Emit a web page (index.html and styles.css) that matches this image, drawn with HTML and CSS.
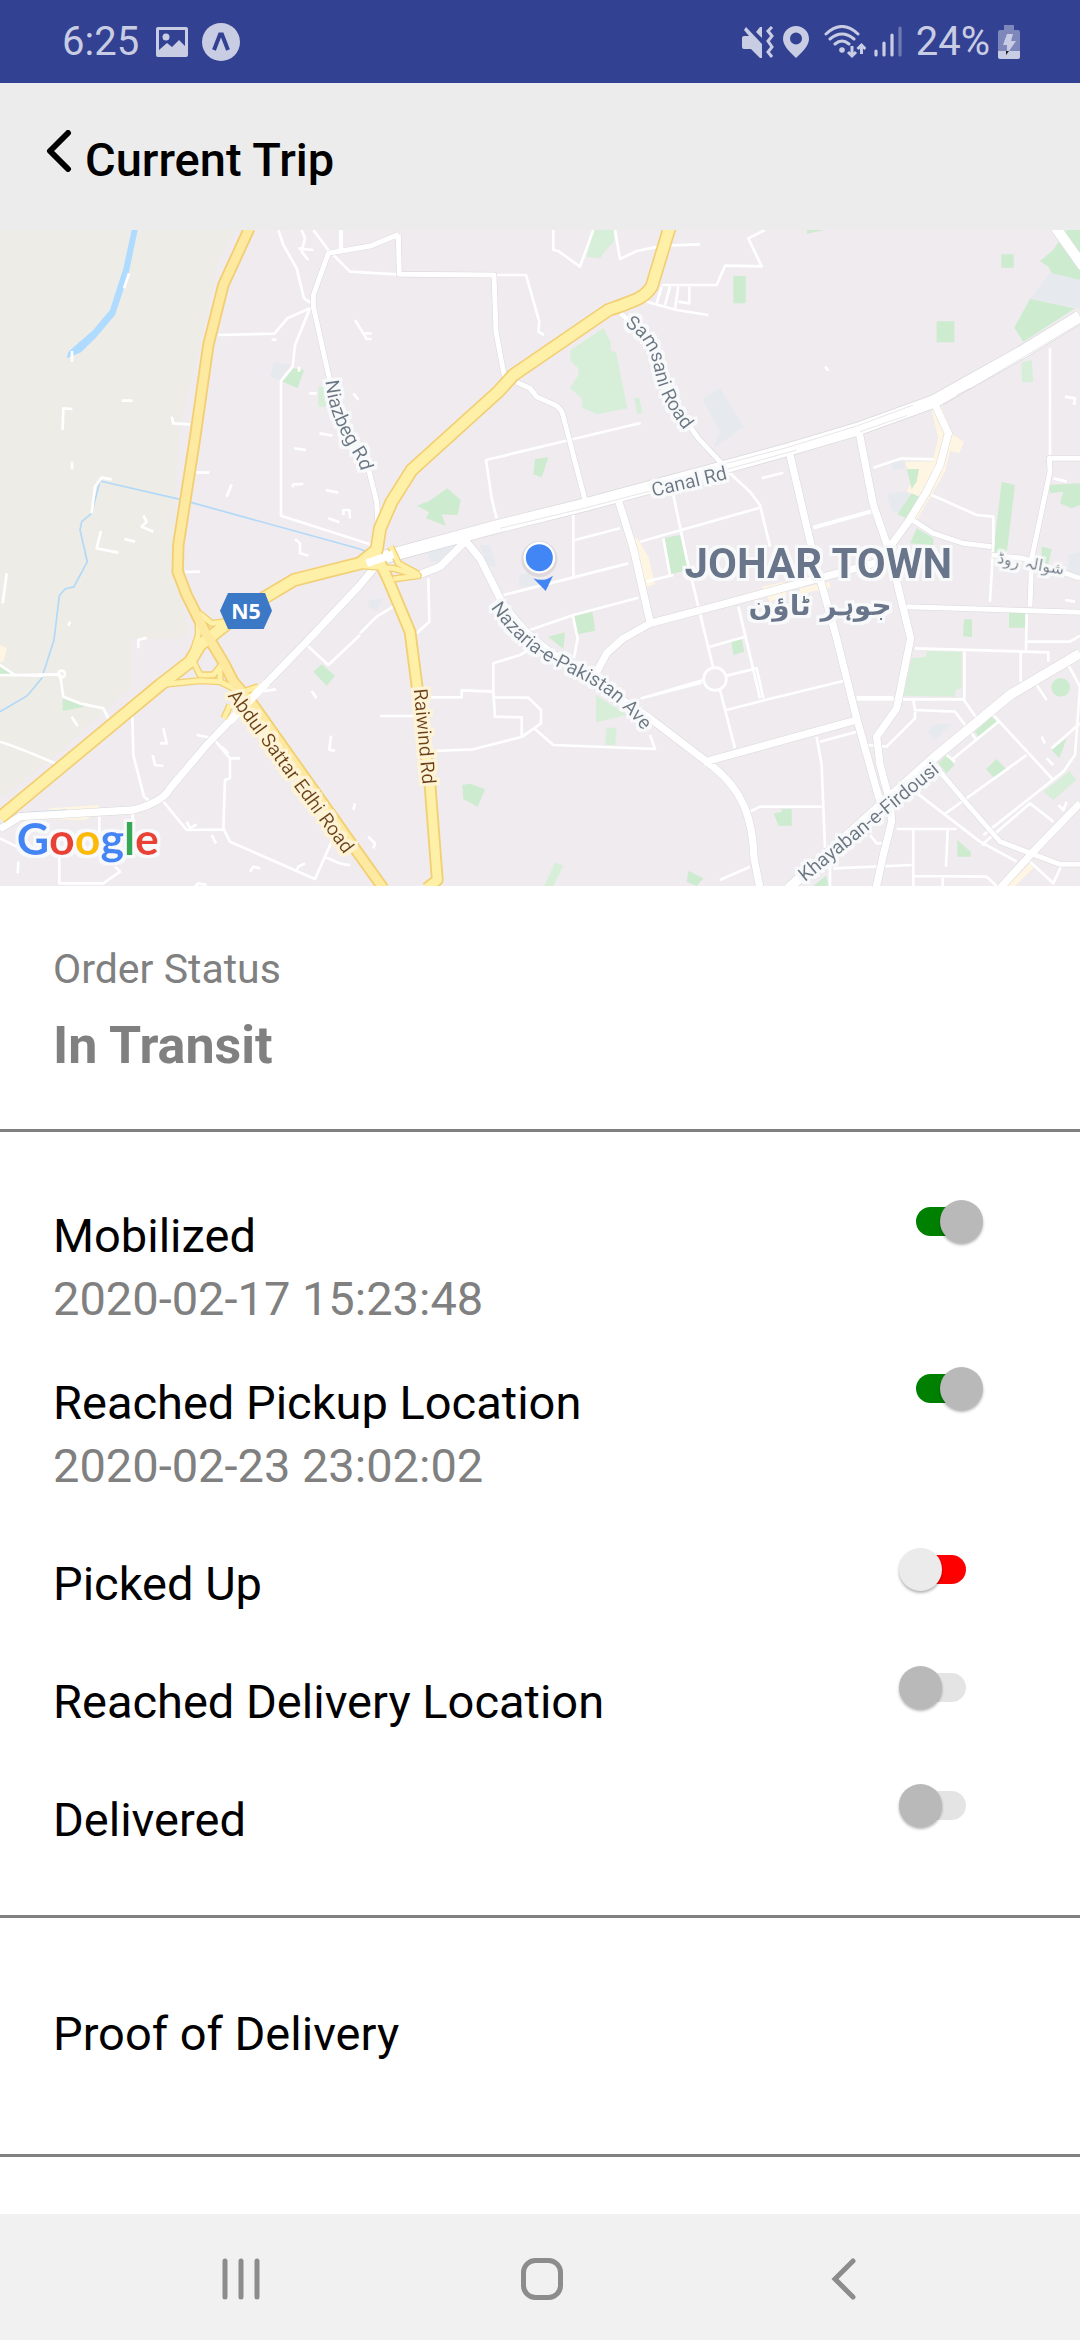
FILE: index.html
```html
<!DOCTYPE html>
<html lang="en">
<head>
  <meta charset="UTF-8">
  <meta name="viewport" content="width=device-width, initial-scale=1.0">
  <title>Current Trip</title>
  <link rel="stylesheet" href="styles.css">
</head>
<body>
  <div class="status-bar">
    <div class="status-left">
      <span>6:25</span>
      <svg class="icon-image" width="32" height="30" viewBox="0 0 32 30">
        <path fill="currentColor" fill-rule="evenodd" d="M2 0h28a2 2 0 0 1 2 2v26a2 2 0 0 1-2 2H2a2 2 0 0 1-2-2V2a2 2 0 0 1 2-2zM3 3v20l8-7 5 4 7-7 6 6V3z"/>
        <circle cx="10" cy="10" r="3.500" fill="currentColor"/>
      </svg>
      <svg width="38" height="38" viewBox="0 0 38 38">
        <circle cx="19" cy="19" r="19" fill="currentColor"/>
        <path d="M12 27l6-15.500h2l6 15.500" fill="none" stroke="#334192" stroke-width="4"/>
      </svg>
    </div>
    <div class="status-right">
      <svg width="32" height="32" viewBox="0 0 32 32">
        <path fill="currentColor" d="M0 12a2 2 0 0 1 2-2h5L2 4l2-3 16 17v14h-2l-9-9H2a2 2 0 0 1-2-2zM20 1v11l-6-6 4-5z"/>
        <path d="M30 1l-4 4 4 5-4 5 4 6-4 5 4 5" fill="none" stroke="currentColor" stroke-width="3"/>
      </svg>
      <svg class="icon-pin" width="26" height="32" viewBox="0 0 26 32">
        <path fill="currentColor" fill-rule="evenodd" d="M13 0a13 13 0 0 1 13 13c0 7-7 13-13 19C7 26 0 20 0 13A13 13 0 0 1 13 0zm0 6.500a6 6 0 1 0 0 12 6 6 0 0 0 0-12z"/>
      </svg>
      <svg class="icon-wifi" width="42" height="34" viewBox="0 0 42 34">
        <g fill="none" stroke="currentColor" stroke-width="3" stroke-linecap="round">
          <path d="M2 9q16-15 32 0M6 14q12-10 24 0M11 19q7-6 14 0"/>
          <path stroke-linecap="butt" d="M28 21v10M24 27l4 4 4-4M37.500 29V19M33.500 24l4-4 4 4"/>
        </g>
        <circle cx="18" cy="25" r="2.800" fill="currentColor"/>
      </svg>
      <svg class="icon-signal" width="28" height="31" viewBox="0 0 28 31">
        <g stroke="currentColor" stroke-width="3.200" stroke-linecap="round">
          <path d="M2 25v4M10 17v12M18 9v20"/>
          <path d="M26 2v27" opacity=".4"/>
        </g>
      </svg>
      <span>24%</span>
      <svg class="icon-battery" width="22" height="34" viewBox="0 0 22 34">
        <path fill="currentColor" opacity=".5" d="M6 0h10v5h4a2 2 0 0 1 2 2v19H0V7a2 2 0 0 1 2-2h4z"/>
        <path fill="currentColor" d="M0 26h22v6a2 2 0 0 1-2 2H2a2 2 0 0 1-2-2zM9 9h6l-2 7h5L9 29v-9H5z"/>
        <path fill="#222" d="M8 26h3l-3 4z"/>
      </svg>
    </div>
  </div>

  <header class="header">
    <button class="back" aria-label="Back">
      <svg width="26" height="42" viewBox="0 0 26 42">
        <path d="M22 3L4 21l18 18" fill="none" stroke="currentColor" stroke-width="6" stroke-linecap="round" stroke-linejoin="round"/>
      </svg>
    </button>
    <h1>Current Trip</h1>
  </header>

  <svg class="map" viewBox="0 15 3240 1968" role="img" aria-label="Map of Johar Town">
    <defs>
      <path id="lblNiazbeg" d="M976 468C985 550 1008 600 1040 655S1080 710 1086 770"/>
      <path id="lblSamsani" d="M1873 300C1940 345 1952 380 1962 430S1985 530 2055 620"/>
      <path id="lblCanal" d="M1960 815L2240 749"/>
      <path id="lblNazaria" d="M1472 1148C1560 1275 1640 1310 1720 1350S1870 1430 1960 1560"/>
      <path id="lblSattar" d="M682 1412L1090 1967"/>
      <path id="lblRaiwind" d="M1241 1393L1270 1710"/>
      <path id="lblKhayaban" d="M2415 1972L2860 1607"/>

      <path id="n5" d="M748 10L670 180L625 360L585 640L535 960L533 1040L560 1110L615 1220L672 1315L700 1370L760 1440L1080 1892L1150 1990"/>
      <path id="north" d="M2008 10L1955 185C1935 215 1920 222 1825 255L1540 450L1495 500L1235 735L1175 830L1140 910L1130 975L1080 1015L980 1040L882 1065L740 1150L600 1260L570 1310L480 1380L0 1778"/>
      <path id="raiwind" d="M1130 990L1165 1065L1230 1220L1252 1390L1290 1680L1312 1965L1280 1990"/>
      <path id="ramps" d="M595 1160V1230L572 1300M598 1165L635 1195L680 1190M490 1378L600 1367L660 1370L725 1402L775 1385M580 1310L600 1350H640L668 1315M660 1370V1330M1172 965L1195 1015L1255 1048M1080 1022L1180 1030L1255 1052L1180 1062M690 1440L672 1480"/>
      <path id="major" d="M1130 1020L1080 1080L920 1250L745 1430L620 1560L510 1690Q490 1730 400 1755L60 1775L0 1812M1255 1050L1320 1025L1390 955M1395 945L1440 1000L1500 1120C1560 1220 1640 1280 1720 1325L1950 1480L2120 1610C2230 1690 2258 1780 2262 1900L2280 1990M1855 825L1900 970L1950 1190M2640 1010L2160 1140L1950 1195L1870 1240L1820 1285L1785 1350M2370 690L2440 990L2510 1240L2570 1480L2640 1730M2578 625L2620 840L2665 970L2690 1070L2732 1240L2690 1450L2630 1535L2640 1620L2670 1730L2675 1790L2650 1890L2628 1990M2808 545L2845 625L2820 720L2780 800L2725 890L2670 965M2110 1612L2570 1485M3000 1990L3100 1880L3240 1735"/>
      <path id="middle" d="M1023 10V72M1195 28L1115 62L985 85L940 210V245L990 470M1105 730L1130 830L1135 920M1195 28L1198 148L1482 150L1488 320L1516 470M1550 472L1590 490L1610 515L1665 540Q1685 550 1690 575L1755 825M1862 265L1890 290M2060 590L2095 640L2165 715M2730 880L2800 925L2890 955L2975 965M2975 990L3070 1000L3240 1060M3240 700H3148L3150 740L3095 1000L3090 1145M2720 1145L3240 1162M2820 1640L2900 1735L3000 1850L3180 1918H3240"/>
      <path id="canal" d="M1120 1005L1490 905L1760 838L2160 730L2360 675L2570 613L2800 530L3060 385L3240 275"/>

      <!-- light outline behind the labels -->
      <filter id="halo" x="-10%" y="-10%" width="120%" height="120%">
        <feMorphology in="SourceAlpha" operator="dilate" radius="8" result="fat"/>
        <feFlood flood-color="#f8f9fa"/>
        <feComposite in2="fat" operator="in"/>
        <feMerge><feMergeNode/><feMergeNode in="SourceGraphic"/></feMerge>
      </filter>
      <filter id="haloYellow" x="-10%" y="-10%" width="120%" height="120%">
        <feMorphology in="SourceAlpha" operator="dilate" radius="8" result="fat"/>
        <feFlood flood-color="#fef4d5"/>
        <feComposite in2="fat" operator="in"/>
        <feMerge><feMergeNode/><feMergeNode in="SourceGraphic"/></feMerge>
      </filter>
    </defs>

    <rect y="15" width="3240" height="1968" fill="#efebef"/>
    <path fill="#eeece7" d="M0 15H705L655 110L620 270L600 370L565 500L540 600L525 830L520 1000L540 1110L568 1220L545 1240H395V1385L180 1580L0 1720z"/>

    <!-- campuses and shopping areas -->
    <path fill="#e6eaee" d="M822 412L870 420L840 465L810 455zM2107 522L2160 490L2232 605L2140 670L2160 620zM3150 145L3240 165V250L3090 222zM2660 810L2735 795L2700 865L2675 855zM2670 710H2715V730L2680 735zM1285 980L1370 960L1330 1010H1290zM1440 960H1470L1490 1025L1460 1020zM1555 1050L1590 1045L1615 1080L1560 1085zM1105 1125L1150 1120L1130 1160L1105 1145zM2782 1520L2800 1500L2855 1495L2805 1545zM3205 990L3240 980V1050L3205 1040z"/>
    <path fill="#fff5e3" d="M2795 555L2825 545L2860 630L2892 650L2878 685L2850 678L2835 740L2750 885L2735 880L2760 815L2720 800L2735 770L2715 710H2797L2815 640zM1900 940H1912L1945 995L1965 1078L1940 1085zM2285 1085L2355 1070L2360 1110L2310 1130zM2400 1090L2490 1070V1088L2400 1108zM0 1260L20 1270L10 1310H0zM150 1750L295 1740V1765L255 1785L120 1782zM3020 1983L3090 1915L3100 1930L3045 1983z"/>

    <!-- parks -->
    <path fill="#cdebcf" d="M880 430L912 435L893 490L843 468zM1605 702L1645 697L1625 757L1600 748zM1250 842L1288 828L1342 790L1382 825L1373 870L1325 868L1337 902L1278 880L1288 862zM1990 940L2040 930L2065 1035L2010 1048zM2420 15H2472L2422 26zM2200 153h37v82h-37zM2810 289h53v63h-53zM3004 88h37v40h-37zM3200 15H3240V165L3155 145L3145 125L3120 108L3160 75zM3090 222L3225 250L3070 350L3043 308zM3005 770L3045 780L3020 985H2980zM3145 780L3240 775V840L3215 850L3180 835L3190 800L3150 805zM3125 965L3155 972L3145 1020H3125zM2720 732H2757L2750 770L2735 792zM2735 805L2757 815L2720 880L2692 868zM2750 910L2800 940V960L2730 955zM0 1325L40 1350H0zM188 1420L255 1445L188 1458zM940 1340L965 1318L1005 1352L980 1382zM1722 1172L1777 1160L1786 1217L1732 1228zM1645 1235L1695 1222L1690 1272zM1387 1680L1410 1676L1455 1693L1433 1745L1390 1722zM2065 1938L2110 1960L2090 1983L2060 1970zM2194 1250L2225 1242L2233 1280L2200 1290zM2892 1183h24v54l-27-4zM3027 1160h50v48h-50zM2925 1520L2975 1475L2993 1493L2940 1542zM2815 1615L2840 1590L2863 1620L2840 1645zM2958 1632L2990 1602L3018 1632L2985 1662zM3155 1575L3200 1540L3178 1600zM2322 1765L2345 1762V1752H2375V1802H2335zM2872 1845L2912 1880V1895H2872zM2440 1983L2478 1952L2485 1983z"/>
    <path fill="#d7efd9" d="M955 485H985V545H955zM1780 15H1840L1842 50L1818 75L1800 100L1760 95zM1810 310L1832 350V378L1848 382L1882 550L1790 568L1748 548L1745 520L1710 490L1735 450V430L1710 405L1712 375zM1902 518H1917L1928 563L1912 567zM3065 412L3095 405L3100 472H3065zM1788 1410L1880 1470L1788 1492zM1820 1508H1850L1845 1560H1815zM1665 1912L1690 1922L1660 1983H1633zM2735 1300L2778 1295L2780 1278L2885 1280V1390L2868 1395L2865 1415L2710 1412zM3130 1700L3210 1638L3228 1665L3160 1725z"/>
    <circle cx="3182" cy="1387" r="28" fill="#cdebcf"/>

    <!-- water -->
    <path fill="#aedbff" d="M395 15H413L385 150L345 270L290 335L243 382L200 400L205 380L280 315L330 255L370 130z"/>
    <path fill="none" stroke="#b2d9f7" stroke-width="5" d="M262 1010L240 915L245 890L275 865L300 768L540 823L1080 972L1110 985M255 985L262 1010L222 1085L195 1092L178 1112L162 1245L125 1360L82 1412L0 1460M60 1765L200 1755"/>

    <!-- side streets -->
    <g class="street">
      <path d="M835 15L850 60L890 130L912 220L935 235M905 15L915 40L905 80L925 105M895 70L940 75M940 15L985 75L1050 140L1190 148M655 330L823 326L862 280L930 250L885 360L878 425L843 468V872L1110 958M515 575L520 595L570 598M587 742L628 743M695 778L680 815M365 527H398M188 615L190 550L217 552M216 710V733M216 378V410M387 145L372 190M335 763L305 758L285 785L275 865M430 872L440 890L425 905L460 920M303 918L290 970L355 983M373 942L405 950M815 343L830 345M897 425V440M928 505H950M958 625L998 632M883 670L918 675M878 787L880 778L910 777M977 795L1015 803M1030 870V855H1048L1050 880M985 880L1018 892M885 942L900 955V985L925 992M1065 285L1090 325H1115M1090 325L1100 342H1115M1060 505L1075 525"/>
      <path d="M1482 150H1578L1618 290L1615 320L1632 330M1660 15V75L1675 78L1740 125L1780 15M1845 15L1860 102L1910 78L1990 62L2100 58M1985 180H2150L2175 122L2285 124L2245 40L2295 15M1940 230L2030 255L2125 270M1970 235L1985 185M1995 240L2010 185M2025 250L2035 185M2035 230L2068 235V185M1922 594L1458 705L1475 820L1490 880M1720 870V1055M1725 945L1860 910M1920 950L2280 848M2020 810L2060 1000L2140 1330M1990 940L2010 1050M1510 1110L1650 1075L1885 1015M1590 1215L1720 1170L1915 1118M1718 1170L1733 1240L1722 1300M1940 1070L2020 1050"/>
      <path d="M2185 740L2250 800L2280 840L2310 965M2285 760L2350 743M2620 728L2705 700L2800 703M2795 810L2930 870L2980 875V960L2970 1130M3150 370V690M3195 515L3225 520L3222 540M3160 760L3200 770M2475 425L2485 437M3195 1125L3225 1130"/>
      <path d="M1285 1060L1288 1190L1250 1225M1080 1225L1130 1175L1180 1145M1620 1255L1560 1290L1480 1315V1400L1385 1396V1417H1290M1480 1417L1585 1418L1623 1455V1495L1567 1535L1420 1573L1300 1578M1480 1400L1485 1475L1565 1477V1535M1605 1512L1660 1560L1965 1572L1950 1530M1140 1473H1240M2110 1365L1925 1420L2105 1373M2180 1352L2270 1330L2290 1420M2180 1455L2295 1425L2530 1368M2215 1145L2240 1250L2280 1420M2160 1395L2205 1570M2130 1265L2235 1235M1105 1835L1125 1855L1120 1870"/>
      <path d="M2570 1423H2890L2930 1480M2570 1417H2680M2893 1280V1425M2745 1270L3145 1282V1310M3062 1280V1370M3080 1165L3078 1275M3080 1250H3210L3240 1232M3205 1320L3240 1385L3225 1590L3190 1640L2950 1830M3110 1380L3140 1425M2740 1425L2745 1455L2865 1460L2930 1545M2745 1460V1480L2660 1565L2600 1560M2855 1605L2995 1490M2840 1590L2865 1610M2980 1470L3160 1665M2830 1770L3080 1590M2745 1700L2940 1850L3050 1910M2945 1860L3090 1735L3160 1790M3090 1910L3160 1975L3185 1920M2690 1812H2870M2740 1812V1983M2843 1815L2838 1925M2500 1930L2735 1920M2740 1953L2960 1955L2990 1983M2828 1955V1983M2450 1535L2465 1620L2475 1870M2250 1760L2280 1745H2465M2460 1550L2570 1520M2160 1965L2250 1925M2610 1830L2630 1855H2645M3125 1535L3135 1555M3140 1600L3160 1620M3175 1740L3190 1755L3200 1730M3155 1570L3240 1495M2490 1880V1983"/>
      <path d="M20 1045L8 1135M555 1041L600 1040M0 1320L45 1350L180 1348L190 1415L240 1435L310 1450L325 1480M0 1350L130 1352M415 1270V1245L440 1238M210 1190L205 1203M215 1475L233 1503M0 1550Q50 1565 165 1615M397 1475L400 1590L432 1715L450 1730M490 1510L500 1555H480M458 1590L465 1620L490 1623M590 1530L640 1540L690 1600V1660L675 1665L670 1810L690 1850L945 1962L995 1850M690 1600H720M670 1813L560 1815L490 1730M560 1790L570 1810L590 1798M920 1260L985 1320L1080 1230M780 1400L828 1393M935 1398L950 1420M993 1532L988 1575L1005 1577M975 1895Q1020 1920 1050 1920M178 1890V1975L310 1975L360 1940L345 1925M298 1775V1850M398 1760V1800M0 1840L50 1865M55 1910L53 1945M635 1830L648 1855M750 1940L760 1925L780 1930M665 1565L685 1585M890 1940L895 1925L915 1915M1065 1735L1060 1755M585 1983L595 1975L620 1980"/>
      <circle cx="185" cy="1347" r="10"/>
      <circle cx="2145" cy="1362" r="34"/>
      <path d="M2440 908L2618 858" stroke-width="12"/>
    </g>

    <!-- main roads, casing first -->
    <g fill="none" stroke-linejoin="round">
      <g stroke="#dad8db">
        <use href="#middle" stroke-width="18"/>
        <use href="#major" stroke-width="25"/>
        <use href="#canal" stroke-width="42"/>
        <path d="M3165 5L3250 125" stroke-width="34"/>
        <path d="M3240 1285L3030 1410L2800 1600L2365 1990" stroke-width="32"/>
      </g>
      <g stroke="#fff">
        <use href="#middle" stroke-width="15"/>
        <use href="#major" stroke-width="22"/>
        <use href="#canal" stroke-width="38"/>
        <path d="M3165 5L3250 125" stroke-width="31"/>
        <path d="M3240 1285L3030 1410L2800 1600L2365 1990" stroke-width="29"/>
      </g>
      <path d="M1500 910L1760 848L1950 798M2180 715L2360 668L2570 603L2740 540M2180 733L2390 675M2580 620L2720 572M2870 510L2910 490M2830 540L3240 295" stroke="#dcdadd" stroke-width="2"/>
      <g stroke="#f3cf73">
        <use href="#ramps" stroke-width="22"/>
        <use href="#n5" stroke-width="37"/>
        <use href="#raiwind" stroke-width="38"/>
        <use href="#north" stroke-width="42"/>
      </g>
      <g stroke="#fff0a8">
        <use href="#ramps" stroke-width="14"/>
        <use href="#raiwind" stroke-width="27"/>
        <use href="#north" stroke-width="32"/>
        <use href="#n5" stroke="#fee9a0" stroke-width="26"/>
      </g>
      <path d="M800 1374L745 1430L690 1488M1100 1015L1180 988" stroke="#fff" stroke-width="24"/>
    </g>

    <!-- N5 shield -->
    <path fill="#3b78c6" d="M660 1157L684 1104H795L816 1157L791 1212H684z"/>
    <text class="shield" x="738" y="1181">N5</text>

    <!-- street names -->
    <g class="road-label">
      <text><textPath href="#lblNiazbeg">Niazbeg Rd</textPath></text>
      <text><textPath href="#lblSamsani">Samsani Road</textPath></text>
      <text><textPath href="#lblCanal">Canal Rd</textPath></text>
      <text><textPath href="#lblNazaria">Nazaria-e-Pakistan Ave</textPath></text>
      <text><textPath href="#lblKhayaban">Khayaban-e-Firdousi</textPath></text>
      <text class="urdu-road" transform="rotate(10 3090 1030)" x="3090" y="1032">شوالہ روڈ</text>
    </g>
    <g class="road-label highway">
      <text><textPath href="#lblSattar">Abdul Sattar Edhi Road</textPath></text>
      <text><textPath href="#lblRaiwind">Raiwind Rd</textPath></text>
    </g>
    <text class="town" x="2455" y="1058">JOHAR TOWN</text>
    <text class="town urdu" x="2460" y="1170">جوہر ٹاؤن</text>

    <!-- current position -->
    <circle cx="1618" cy="1002" r="54" fill="#000" opacity=".08"/>
    <circle cx="1618" cy="998" r="44" fill="#4285f4" stroke="#fff" stroke-width="7"/>
    <path fill="#4285f4" d="M1600 1060Q1632 1072 1659 1052L1637 1098z"/>

    <text class="google" x="50" y="1891"><tspan fill="#4285f4">G</tspan><tspan fill="#e94235">o</tspan><tspan fill="#fabb05">o</tspan><tspan fill="#4285f4">g</tspan><tspan fill="#34a853">l</tspan><tspan fill="#e94235">e</tspan></text>
  </svg>

  <main>
    <section class="order-status">
      <p class="caption">Order Status</p>
      <p class="state">In Transit</p>
    </section>

    <section class="steps">
      <div class="step">
        <label for="mobilized">Mobilized<span class="time">2020-02-17 15:23:48</span></label>
        <input class="switch" type="checkbox" id="mobilized" checked disabled>
      </div>
      <div class="step">
        <label for="reachedPickup">Reached Pickup Location<span class="time">2020-02-23 23:02:02</span></label>
        <input class="switch" type="checkbox" id="reachedPickup" checked disabled>
      </div>
      <div class="step pending">
        <label for="pickedUp">Picked Up</label>
        <input class="switch" type="checkbox" id="pickedUp">
      </div>
      <div class="step pending">
        <label for="reachedDelivery">Reached Delivery Location</label>
        <input class="switch" type="checkbox" id="reachedDelivery" disabled>
      </div>
      <div class="step pending">
        <label for="delivered">Delivered</label>
        <input class="switch" type="checkbox" id="delivered" disabled>
      </div>
    </section>

    <section class="proof">
      <h2>Proof of Delivery</h2>
    </section>
  </main>

  <nav class="nav-bar">
    <button aria-label="Recent apps">
      <svg width="44" height="44" viewBox="0 0 44 44">
        <path d="M6 4v36M22 4v36M38 4v36" stroke="currentColor" stroke-width="5" stroke-linecap="round"/>
      </svg>
    </button>
    <button aria-label="Home">
      <svg width="44" height="44" viewBox="0 0 44 44">
        <rect x="3.500" y="3.500" width="37" height="37" rx="12" fill="none" stroke="currentColor" stroke-width="5"/>
      </svg>
    </button>
    <button aria-label="Back">
      <svg width="44" height="44" viewBox="0 0 44 44">
        <path d="M32 4L14 22l18 18" fill="none" stroke="currentColor" stroke-width="5" stroke-linecap="round"/>
      </svg>
    </button>
  </nav>
</body>
</html>
```

FILE: styles.css
```css
* {
  box-sizing: border-box;
}
body {
  margin: 0;
  min-height: 100vh;
  display: flex;
  flex-direction: column;
  background: #fff;
  color: #000;
  font-family: Roboto, sans-serif;
  font-size: 47px;
  line-height: 63px;
}
h1, h2, p {
  margin: 0;
  font-weight: 400;
}
button {
  padding: 0;
  border: none;
  background: none;
  color: inherit;
  cursor: pointer;
}
svg {
  display: block;
}

/* phone status bar */
.status-bar {
  display: flex;
  justify-content: space-between;
  align-items: center;
  height: 83px;
  padding: 0 60px 0 62px;
  background: #334192;
  color: #c9cde4;
  font-size: 40px;
  line-height: 86px;
}
.status-left,
.status-right {
  display: flex;
  align-items: center;
}
.status-left {
  gap: 14px;
}
.status-left span {
  margin-right: 3px;
}
.status-right span {
  margin: 0 8px 0 14px;
}
.icon-pin {
  margin-left: 9px;
}
.icon-wifi {
  margin-left: 15px;
}
.icon-signal {
  margin-left: 8px;
}

.header {
  display: flex;
  gap: 13px;
  height: 147px;
  padding: 47px 46px 0;
  background: #ececec;
}
.header h1 {
  font-size: 47px;
  font-weight: 500;
  line-height: 60px;
}
.back {
  align-self: flex-start;
}

/* map */
.map {
  width: 100%;
}
.street {
  fill: none;
  stroke: #fff;
  stroke-width: 8;
  stroke-linejoin: round;
}
.road-label {
  font-size: 58px;
  fill: #6b7785;
}
.road-label text {
  filter: url(#halo);
}
.highway {
  fill: #72400f;
}
.highway text {
  filter: url(#haloYellow);
}
.urdu-road {
  font-family: "DejaVu Sans", sans-serif;
  font-size: 48px;
  text-anchor: middle;
}
.shield {
  font-family: "Open Sans", sans-serif;
  font-size: 64px;
  font-weight: 700;
  fill: #fff;
  text-anchor: middle;
}
.town {
  font-size: 126px;
  font-weight: 700;
  fill: #67758a;
  text-anchor: middle;
  filter: url(#halo);
}
.town.urdu {
  font-family: "DejaVu Sans", sans-serif;
  font-size: 84px;
}
.google {
  font-family: Lato, sans-serif;
  font-size: 134px;
  font-weight: 700;
  filter: url(#halo);
}

/* trip details */
.order-status,
.steps,
.proof {
  border-bottom: 3px solid #808080;
}
.order-status {
  padding: 52px 53px 46px;
  color: #808080;
}
.caption {
  font-size: 41px;
}
.state {
  margin-top: 7px;
  font-size: 52px;
  font-weight: 700;
  line-height: 75px;
}
.steps {
  display: flex;
  flex-direction: column;
  gap: 37px;
  padding: 68px 97px 64px 53px;
}
.step {
  display: flex;
  justify-content: space-between;
  align-items: flex-start;
}
.step label {
  padding-top: 4px;
}
.pending {
  padding-top: 14px;
}
.time {
  display: block;
  color: #808080;
}
.proof {
  padding: 84px 53px 89px;
}
.proof h2 {
  font-size: 47px;
}

.switch {
  appearance: none;
  position: relative;
  display: flex;
  width: 84px;
  height: 43px;
  margin: 0;
}
.switch::before {
  content: "";
  position: absolute;
  left: 17px;
  top: 7px;
  width: 50px;
  height: 29px;
  border-radius: 15px;
  background: #f00;
}
.switch::after {
  content: "";
  position: relative;
  width: 43px;
  height: 43px;
  border-radius: 50%;
  background: #ebebeb;
  box-shadow: 0 2px 3px rgba(0, 0, 0, 0.3);
}
.switch:disabled::before {
  background: #e4e4e4;
}
.switch:disabled::after {
  background: #b9b9b9;
}
.switch:checked {
  justify-content: flex-end;
}
.switch:checked::before {
  background: #008000;
}

/* android navigation */
.nav-bar {
  display: flex;
  justify-content: space-around;
  align-items: center;
  height: 126px;
  margin-top: auto;
  padding: 4px 86px 0 90px;
  background: #f1f1f1;
  color: #8c8c8c;
}
```
